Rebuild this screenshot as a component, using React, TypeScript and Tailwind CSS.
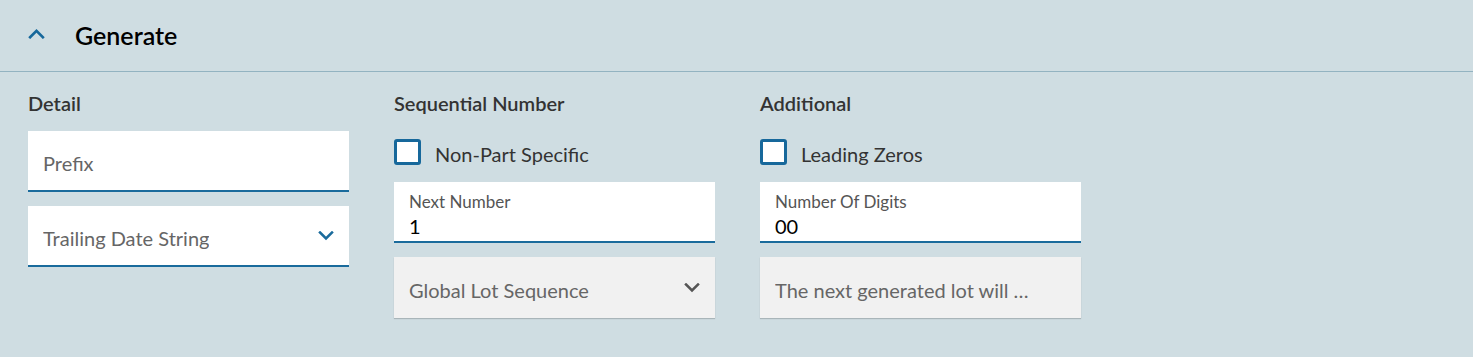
import React from 'react';

const Chevron: React.FC<{ up?: boolean; className?: string }> = ({ up, className }) => (
    <svg viewBox="0 0 16 10" className={className} fill="none" stroke="currentColor" strokeWidth={2.5} strokeLinecap="square">
        {up ? <path d="M2 8.5 L8 2.5 L14 8.5" /> : <path d="M2 1.5 L8 7.5 L14 1.5" />}
    </svg>
);

const Checkbox: React.FC<{ label: string }> = ({ label }) => (
    <label className="flex items-center h-[27px] mt-[23px] cursor-pointer">
        <span className="w-[27px] h-[26px] border-[3px] border-[#17689b] rounded-[3px] bg-white" />
        <span className="ml-[14px] mt-[4px] text-[20px] text-[#333]">{label}</span>
    </label>
);

const TextField: React.FC<{ placeholder: string }> = ({ placeholder }) => (
    <div className="h-[61px] bg-white border-b-2 border-[#1a6b9c] flex items-center px-[15px] pt-[4px]">
        <input placeholder={placeholder} className="w-full bg-transparent outline-none text-[20px] text-[#333] placeholder:text-[#666]" />
    </div>
);

const LabeledField: React.FC<{ label: string; value: string }> = ({ label, value }) => (
    <div className="h-[61px] bg-white border-b-2 border-[#1a6b9c] flex flex-col px-[15px] pt-[10px]">
        <span className="text-[17px] leading-[20px] text-[#555]">{label}</span>
        <span className="text-[20px] leading-[28px] text-black">{value}</span>
    </div>
);

const Select: React.FC<{ value: string; disabled?: boolean }> = ({ value, disabled }) => (
    <div className={disabled
        ? "h-[61px] bg-[#f1f1f1] shadow-[0_1px_1px_rgba(0,0,0,0.18)] flex items-center justify-between px-[15px] pt-[4px]"
        : "h-[61px] bg-white border-b-2 border-[#1a6b9c] flex items-center justify-between px-[15px] pt-[4px]"}>
        <span className="text-[20px] text-[#666] truncate">{value}</span>
        <Chevron className={disabled ? "w-[16px] h-[10px] text-[#555] mb-[4px]" : "w-[16px] h-[10px] text-[#1a6b9c] mb-[4px]"} />
    </div>
);

const SectionTitle: React.FC<{ children: React.ReactNode }> = ({ children }) => (
    <h3 className="text-[20px] font-semibold text-[#333] h-[24px] leading-[24px]">{children}</h3>
);

export default function App() {
    return (
        <div className="w-[1473px] h-[357px] bg-[#cfdde2] font-['Lato',sans-serif]">
            <div className="h-[72px] flex items-center border-b border-[#93b3c1] px-[28px]">
                <Chevron up className="w-[17px] h-[11px] text-[#17689b] mb-[4px]" />
                <h2 className="ml-[30px] text-[25px] font-semibold text-black">Generate</h2>
            </div>
            <div className="flex gap-[45px] px-[28px] pt-[19px]">
                <div className="w-[321px] flex flex-col">
                    <SectionTitle>Detail</SectionTitle>
                    <div className="mt-[16px] flex flex-col gap-[14px]">
                        <TextField placeholder="Prefix" />
                        <Select value="Trailing Date String" />
                    </div>
                </div>
                <div className="w-[321px] flex flex-col">
                    <SectionTitle>Sequential Number</SectionTitle>
                    <Checkbox label="Non-Part Specific" />
                    <div className="mt-[17px] flex flex-col gap-[14px]">
                        <LabeledField label="Next Number" value="1" />
                        <Select value="Global Lot Sequence" disabled />
                    </div>
                </div>
                <div className="w-[321px] flex flex-col">
                    <SectionTitle>Additional</SectionTitle>
                    <Checkbox label="Leading Zeros" />
                    <div className="mt-[17px] flex flex-col gap-[14px]">
                        <LabeledField label="Number Of Digits" value="00" />
                        <div className="h-[61px] bg-[#f1f1f1] shadow-[0_1px_1px_rgba(0,0,0,0.18)] flex items-center px-[15px] pt-[4px]">
                            <span className="text-[20px] text-[#666] w-[256px] truncate">The next generated lot will be 00</span>
                        </div>
                    </div>
                </div>
            </div>
        </div>
    );
}
